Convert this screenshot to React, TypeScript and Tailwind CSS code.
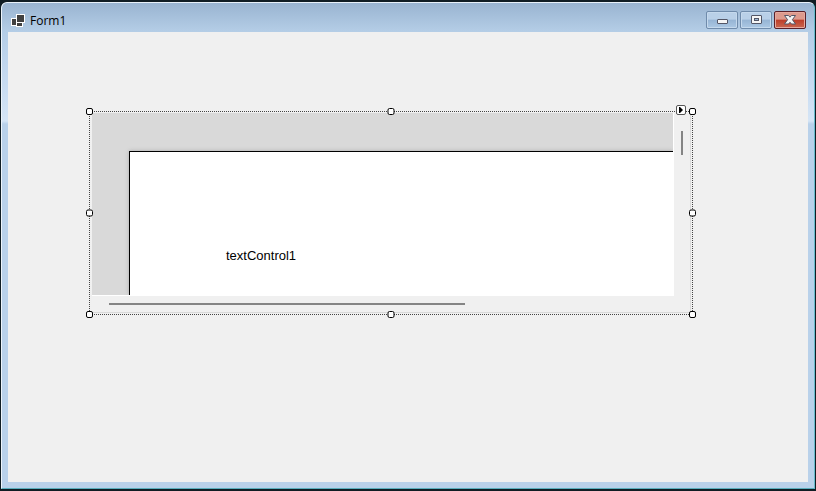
import React from 'react';

interface CaptionButtonProps {
  label: string;
  danger?: boolean;
  children: React.ReactNode;
}

const CaptionButton: React.FC<CaptionButtonProps> = ({ label, danger, children }) => (
  <button
    type="button"
    aria-label={label}
    className={`flex h-[18px] w-8 items-center justify-center rounded-xs border ${
      danger
        ? 'border-[#5a2029] bg-linear-to-b from-[#dd9a8d] from-45% via-[#bd3d29] via-50% to-[#c9664f] inset-shadow-[0_0_0_1px_#e6a99f]'
        : 'border-[#6f8bab] bg-linear-to-b from-[#b9d0e8] from-45% via-[#96b4d4] via-50% to-[#acc8e4] inset-shadow-[0_0_0_1px_#c5d9ed]'
    }`}
  >
    {children}
  </button>
);

const FormIcon = () => (
  <svg width="14" height="13" viewBox="0 0 14 13" aria-hidden="true" shapeRendering="crispEdges">
    <path d="M5 0h9v9h-2v4H5v-1H0V4h5z" fill="#fff" />
    <path d="M6 1h7v7H6zM1 5h4v6H1zM6 9h5v3H6z" fill="#414141" />
  </svg>
);

const handles = [
  '-left-1 -top-1',
  'left-1/2 -top-1 -translate-x-1/2',
  '-right-1 -top-1',
  '-left-1 top-1/2 -translate-y-1/2',
  '-right-1 top-1/2 -translate-y-1/2',
  '-left-1 -bottom-1',
  'left-1/2 -bottom-1 -translate-x-1/2',
  '-right-1 -bottom-1',
];

const TextControl = () => (
  <div className="relative border border-dotted border-[#444] pt-px pr-px pb-px pl-[2px]">
    <div className="border-r border-b border-[#d9d9d9]">
      <div className="flex">
        {/* Page view */}
        <div className="min-w-0 flex-1 border-r border-b border-white bg-[#d9d9d9] pt-[38px] pl-[37px]">
          <div className="border-t border-l border-black bg-white pt-[94px] pb-[29px] pl-24 shadow-[0_0_4px_#aaa] [clip-path:inset(-5px_0_0_-5px)]">
            <p className="font-['Liberation_Sans',Arial,sans-serif] text-[13px] leading-5 text-black">
              textControl1
            </p>
          </div>
        </div>
        {/* Vertical scroll bar */}
        <div className="flex w-4 justify-center pt-[18px]">
          <div className="h-6 w-[2px] bg-[#858585]" />
        </div>
      </div>
      {/* Horizontal scroll bar */}
      <div className="flex h-4 items-center pr-4 pl-[17px]">
        <div className="h-[2px] w-[63%] bg-[#858585]" />
      </div>
    </div>

    {handles.map((position) => (
      <span
        key={position}
        className={`absolute size-[7px] rounded-xs border border-black bg-white ${position}`}
      />
    ))}

    {/* Smart tag */}
    <button
      type="button"
      aria-label="textControl1 tasks"
      className="absolute -top-[7px] right-[6px] flex size-[10px] items-center justify-center rounded-xs border border-[#555] bg-white"
    >
      <svg width="4" height="6" viewBox="0 0 4 6" aria-hidden="true">
        <path d="M0 0h1l3 3-3 3H0z" fill="#000" />
      </svg>
    </button>
  </div>
);

export default function App() {
  return (
    <div className="flex min-h-screen flex-col bg-[#101d24] px-px py-[2px]">
      <div className="flex flex-1 flex-col rounded-t-md border border-t-[#e8f1fa] border-r-[#67bccb] border-b-[#58aebd] border-l-[#edf4fb] bg-[#b9d1ea] bg-[linear-gradient(#99b4d1_0px,#b4cde6_28px,#c0d6ee_60px,#d5e5f6_118px,#b9d1ea_121px)] px-[6px] pb-[6px]">
        <header className="flex h-[29px] items-center justify-between pr-[2px] pl-[3px]">
          <div className="flex items-center gap-[5px] pt-[6px]">
            <FormIcon />
            <h1 className="font-['Open_Sans','Segoe_UI',sans-serif] text-[12px] leading-4 text-black">
              Form1
            </h1>
          </div>
          <div className="flex gap-[2px] pt-[5px]">
            <CaptionButton label="Minimize">
              <svg width="11" height="10" viewBox="0 0 11 10" aria-hidden="true">
                <rect x="0.5" y="4.5" width="10" height="4" rx="0.5" fill="#f5f5f5" stroke="#535666" />
              </svg>
            </CaptionButton>
            <CaptionButton label="Maximize">
              <svg width="11" height="10" viewBox="0 0 11 10" aria-hidden="true">
                <rect x="0.5" y="0.5" width="10" height="8" rx="0.5" fill="#f5f5f5" stroke="#535666" />
                <rect x="3.5" y="3.5" width="4" height="2" fill="#9db8d5" stroke="#535666" />
              </svg>
            </CaptionButton>
            <CaptionButton label="Close" danger>
              <svg width="12" height="10" viewBox="0 0 12 10" aria-hidden="true">
                <path
                  d="M0.5 0.5h4L6 2.2l1.5-1.7h4L8.4 4.7l3.1 4.300h-4L6 7.300 4.500 9h-4l3.100-4.300z"
                  fill="#f5f5f5"
                  stroke="#535666"
                />
              </svg>
            </CaptionButton>
          </div>
        </header>
        <main className="flex-1 bg-[#f0f0f0] pt-[79px] pr-[115px] pb-10 pl-[81px]">
          <TextControl />
        </main>
      </div>
    </div>
  );
}
